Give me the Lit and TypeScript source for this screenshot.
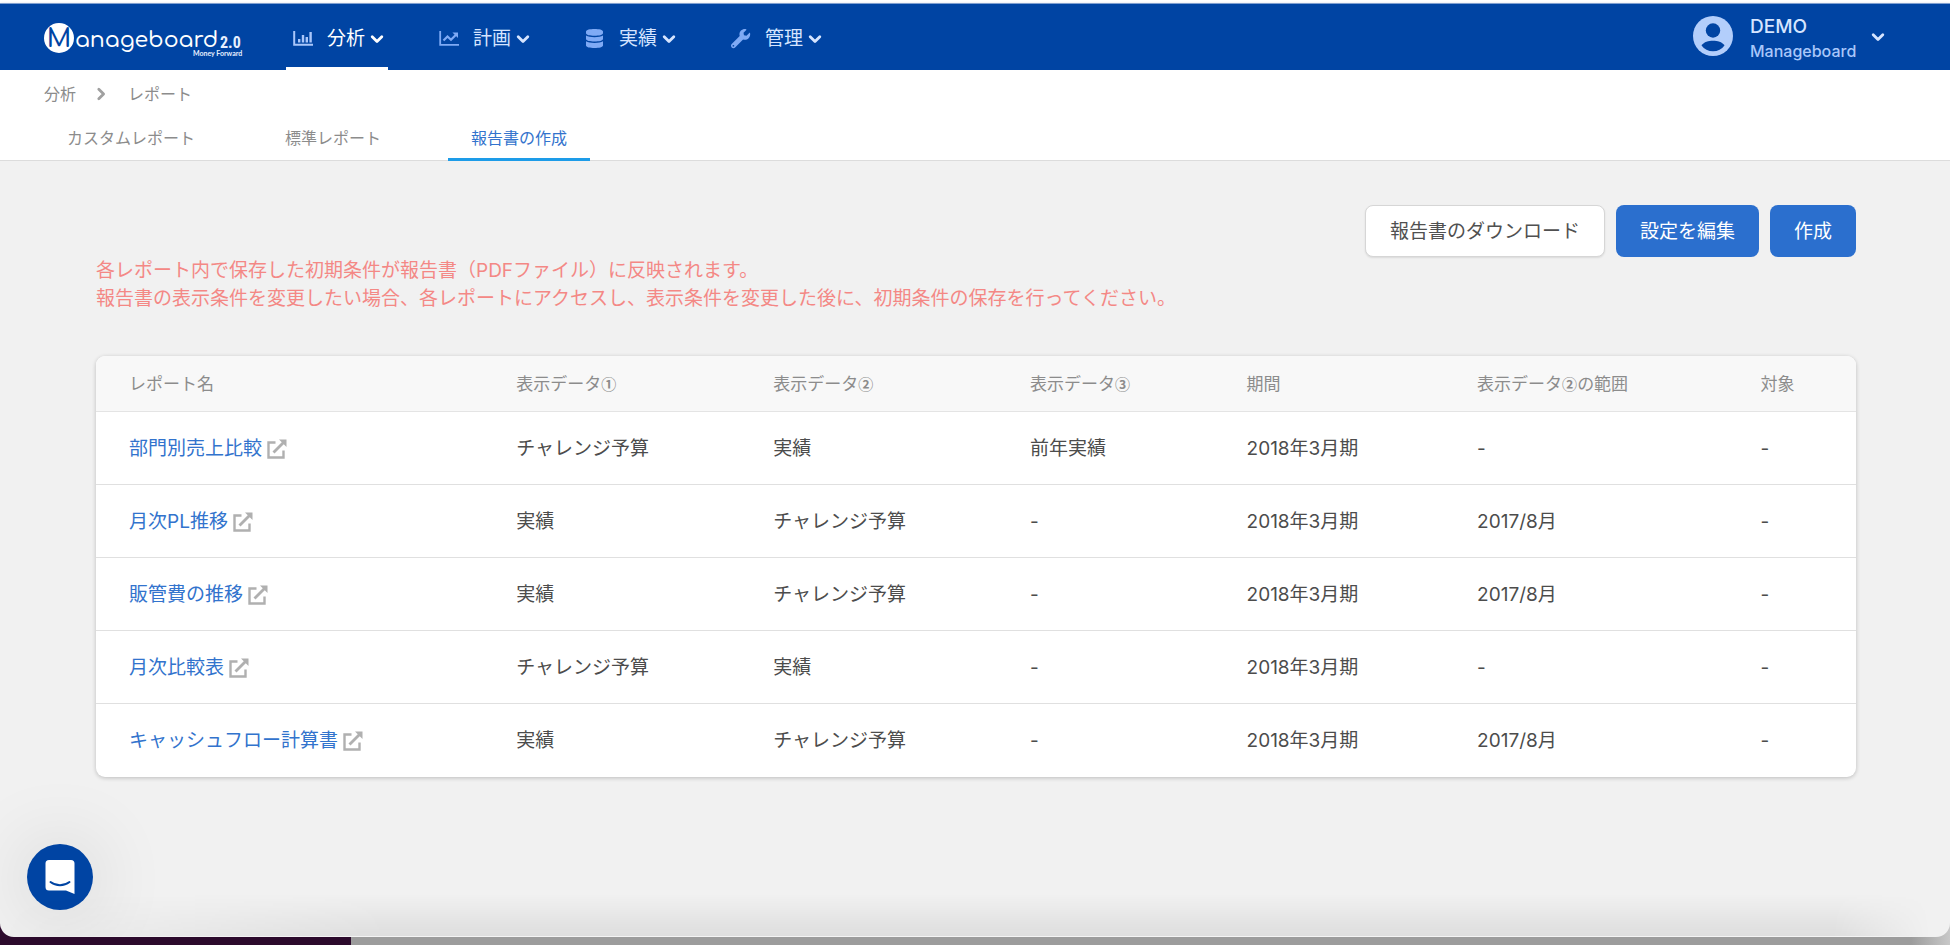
import { LitElement, html, css, svg } from "lit";
import { customElement, property } from "lit/decorators.js";
import { classMap } from "lit/directives/class-map.js";

interface NavItem {
  label: string;
  icon: string;
  active?: boolean;
}

interface Report {
  name: string;
  data1: string;
  data2: string;
  data3: string;
  period: string;
  range: string;
  target: string;
}

const NAV: NavItem[] = [
  { label: "分析", icon: "bars", active: true },
  { label: "計画", icon: "trend" },
  { label: "実績", icon: "database" },
  { label: "管理", icon: "wrench" },
];

const TABS = ["カスタムレポート", "標準レポート", "報告書の作成"];
const ACTIVE_TAB = 2;

const COLUMNS = [
  { text: "レポート名" },
  { text: "表示データ", mark: "①" },
  { text: "表示データ", mark: "②" },
  { text: "表示データ", mark: "③" },
  { text: "期間" },
  { text: "表示データ", mark: "②", rest: "の範囲" },
  { text: "対象" },
];

const REPORTS: Report[] = [
  { name: "部門別売上比較", data1: "チャレンジ予算", data2: "実績", data3: "前年実績", period: "2018年3月期", range: "-", target: "-" },
  { name: "月次PL推移", data1: "実績", data2: "チャレンジ予算", data3: "-", period: "2018年3月期", range: "2017/8月", target: "-" },
  { name: "販管費の推移", data1: "実績", data2: "チャレンジ予算", data3: "-", period: "2018年3月期", range: "2017/8月", target: "-" },
  { name: "月次比較表", data1: "チャレンジ予算", data2: "実績", data3: "-", period: "2018年3月期", range: "-", target: "-" },
  { name: "キャッシュフロー計算書", data1: "実績", data2: "チャレンジ予算", data3: "-", period: "2018年3月期", range: "2017/8月", target: "-" },
];

const ICONS: Record<string, unknown> = {
  bars: svg`<path d="M1.2 2v13.8H20" fill="none" stroke="currentColor" stroke-width="2"/>
    <path d="M5 10h2.4v3.4H5zM8.8 6h2.4v7.4H8.8zM12.6 8H15v5.4h-2.4zM16.4 3h2.4v10.4h-2.4z" fill="currentColor"/>`,
  trend: svg`<path d="M1.2 2v13.8H20" fill="none" stroke="currentColor" stroke-width="1.8"/>
    <path d="M4.5 11.5 8.500 7.500 12 10.800 17 5.800" fill="none" stroke="currentColor" stroke-width="2.2"/>
    <path d="M13.4 3.5H19v5.600z" fill="currentColor"/>`,
  database: svg`<path d="M1 2.5C1 .8 5 0 9.500 0S18 .8 18 2.500v1.700C18 5.900 14 6.700 9.500 6.700S1 5.900 1 4.200z
    M1 6.500c1.800 1.200 5 1.700 8.500 1.700s6.700-.5 8.500-1.700v3.400c0 1.700-4 2.500-8.500 2.500S1 11.600 1 9.900z
    M1 12.200c1.800 1.200 5 1.700 8.500 1.700s6.700-.5 8.500-1.700v4.300c0 1.700-4 2.500-8.500 2.500S1 18.200 1 16.500z" fill="currentColor"/>`,
  wrench: svg`<path transform="scale(.0375)" d="M507.700 109.100c-2.200-9-13.500-12.100-20.100-5.500l-74.400 74.400-67.900-11.300L334 98.900l74.400-74.400c6.600-6.600 3.400-17.900-5.700-20.200-47.400-11.700-99.600.9-136.600 37.900-39.600 39.600-50.500 97.100-34.100 147.200L18.700 402.800c-25 25-25 65.500 0 90.500s65.500 25 90.500 0l213.200-213.200c50.100 16.700 107.500 5.700 147.400-34.200 37.100-37.100 49.700-89.300 37.900-136.800zM64 472c-13.200 0-24-10.800-24-24 0-13.300 10.700-24 24-24s24 10.700 24 24c0 13.200-10.700 24-24 24z" fill="currentColor"/>`,
};

@customElement("nav-icon")
class NavIcon extends LitElement {
  static styles = css`
    :host { display: block; }
    .glyph { display: block; width: 20px; height: 20px; overflow: visible; }
  `;
  @property() name = "bars";
  render() {
    return html`<svg class="glyph" viewBox="0 0 20 20" aria-hidden="true">${ICONS[this.name]}</svg>`;
  }
}

@customElement("chevron-icon")
class ChevronIcon extends LitElement {
  static styles = css`
    :host { display: block; }
    .glyph { display: block; width: 14px; height: 14px; }
    .right { transform: rotate(-90deg); }
  `;
  @property() direction = "down";
  render() {
    return html`<svg class=${classMap({ glyph: true, right: this.direction === "right" })} viewBox="0 0 14 14" aria-hidden="true">
      <path d="M2.2 4.8 7 9.6l4.8-4.8" fill="none" stroke="currentColor" stroke-width="2.8" stroke-linecap="round" stroke-linejoin="round"/>
    </svg>`;
  }
}

@customElement("app-header")
class AppHeader extends LitElement {
  static styles = css`
    :host { display: block; }
    .bar {
      display: flex;
      align-items: stretch;
      box-sizing: border-box;
      height: 67px;
      padding: 0 65px 0 44px;
      background: #0044a3;
      border-top: 1px solid #7f9fd0;
      color: #d6e5ff;
      box-shadow: 0 1px 3px rgba(0, 40, 120, 0.25);
    }
    .brand { display: flex; align-items: center; margin-right: 42px; }
    .logo { display: block; width: 200px; height: 48px; }
    .logo-name { font: 500 22px "Comfortaa", "Quicksand", "Lato", sans-serif; fill: #fff; }
    .logo-m { font: 600 25px "Comfortaa", "Quicksand", "Lato", sans-serif; fill: #0044a3; }
    .logo-version { font: 700 16px "Roboto Condensed", "Roboto", sans-serif; fill: #e6efff; }
    .logo-owner { font: 700 7px "Lato", sans-serif; fill: #e6efff; }
    .nav { display: flex; gap: 44px; }
    .item {
      display: flex;
      align-items: center;
      box-sizing: border-box;
      width: 102px;
      padding: 6px 0 0 7px;
      color: inherit;
      font: 400 19px/24px Inter, "Noto Sans CJK JP", sans-serif;
      white-space: nowrap;
      text-decoration: none;
      border-bottom: 3px solid transparent;
    }
    .item.active { color: #fff; border-bottom-color: #fff; }
    .item-icon { color: #7faaf5; margin-right: 14px; }
    .active .item-icon { color: #a9c6fa; }
    .item-arrow { margin-left: 5px; }
    .user {
      display: flex;
      align-items: center;
      margin-left: auto;
      padding: 0;
      border: 0;
      background: none;
      color: #d6e5ff;
      text-align: left;
      font: 500 19px/24px Inter, "Noto Sans CJK JP", sans-serif;
    }
    .avatar { display: block; width: 40px; height: 40px; margin: 0 17px 2px 0; }
    .names { display: flex; flex-direction: column; min-width: 110px; padding-top: 3px; }
    .org { font-size: 16px; color: #a9c7fa; }
    .user-arrow { margin-left: 11px; }
  `;
  render() {
    return html`<header class="bar">
      <a class="brand" href="#" aria-label="Manageboard 2.0">
        <svg class="logo" viewBox="0 0 200 48">
          <circle cx="15" cy="25" r="15" fill="#fff"/>
          <text class="logo-m" x="15" y="34" text-anchor="middle">M</text>
          <text class="logo-name" x="31" y="34">anageboard</text>
          <text class="logo-version" x="176" y="35">2.0</text>
          <text class="logo-owner" x="149" y="43">Money Forward</text>
        </svg>
      </a>
      <nav class="nav">
        ${NAV.map(
          (n) => html`<a href="#" class=${classMap({ item: true, active: !!n.active })}>
            <nav-icon class="item-icon" name=${n.icon}></nav-icon>
            <span>${n.label}</span>
            <chevron-icon class="item-arrow"></chevron-icon>
          </a>`
        )}
      </nav>
      <button class="user" type="button">
        <svg class="avatar" viewBox="0 0 40 40" aria-hidden="true">
          <circle cx="20" cy="20" r="20" fill="#b3cefb"/>
          <circle cx="20" cy="14.5" r="7.2" fill="#0044a3"/>
          <path d="M8.5 29.5C11 25.800 15.500 24.800 20 24.800s9 1 11.500 4.700C28.800 33.200 24.800 35.300 20 35.300S11.200 33.200 8.500 29.500z" fill="#0044a3"/>
        </svg>
        <span class="names"><span>DEMO</span><span class="org">Manageboard</span></span>
        <chevron-icon class="user-arrow"></chevron-icon>
      </button>
    </header>`;
  }
}

@customElement("page-tabs")
class PageTabs extends LitElement {
  static styles = css`
    :host { display: block; }
    .panel {
      background: #fff;
      padding: 12px 44px 0;
      border-bottom: 1px solid #dcdcdc;
      font: 400 16px/24px Inter, "Noto Sans CJK JP", sans-serif;
      color: #8c8c8c;
    }
    .crumbs { display: flex; align-items: center; }
    .crumb { color: inherit; text-decoration: none; }
    .sep { margin: 0 20px 0 18px; color: #a0a0a0; }
    .tabs { display: flex; gap: 44px; margin: 20px 0 -1px; }
    .tab {
      padding: 0 23px 8px;
      border-bottom: 3px solid transparent;
      color: inherit;
      text-decoration: none;
    }
    .tab.active { color: #3273cd; border-bottom-color: #1d9ce8; }
  `;
  render() {
    return html`<div class="panel">
      <nav class="crumbs" aria-label="breadcrumb">
        <a class="crumb" href="#">分析</a>
        <chevron-icon class="sep" direction="right"></chevron-icon>
        <a class="crumb" href="#">レポート</a>
      </nav>
      <nav class="tabs">
        ${TABS.map((t, i) => html`<a href="#" class=${classMap({ tab: true, active: i === ACTIVE_TAB })}>${t}</a>`)}
      </nav>
    </div>`;
  }
}

@customElement("report-table")
class ReportTable extends LitElement {
  static styles = css`
    :host { display: block; }
    .card {
      border-radius: 9px;
      overflow: hidden;
      background: #fff;
      box-shadow: 0 1px 4px rgba(0, 0, 0, 0.22);
    }
    .table {
      width: 100%;
      border-collapse: separate;
      border-spacing: 0;
      table-layout: fixed;
      font: 400 19px/28px Inter, "Noto Sans CJK JP", sans-serif;
      color: #4c4c4c;
    }
    .c0 { width: 22%; }
    .c1, .c2 { width: 14.6%; }
    .c3 { width: 12.3%; }
    .c4 { width: 13.1%; }
    .c5 { width: 16.1%; }
    .head, .cell { box-sizing: border-box; padding: 1px 0 0 33px; text-align: left; white-space: nowrap; }
    .head {
      height: 56px;
      background: #f8f8f8;
      border-bottom: 1px solid #e4e4e4;
      font-size: 17px;
      font-weight: 400;
      color: #8c8c8c;
    }
    .mark { font-family: "Noto Sans CJK JP", sans-serif; font-size: 15px; font-weight: 700; }
    .cell { height: 73px; border-bottom: 1px solid #e0e0e0; }
    .row:last-child .cell { border-bottom: 0; }
    .link { display: inline-flex; align-items: center; gap: 5px; color: #3273cd; text-decoration: none; }
    .open { display: block; width: 20px; height: 20px; color: #b0b0b0; }
  `;
  render() {
    return html`<div class="card">
      <table class="table">
        <thead>
          <tr>${COLUMNS.map(
            (c, i) => html`<th scope="col" class="head c${i}">${c.text}${c.mark ? html`<span class="mark">${c.mark}</span>` : ""}${c.rest ?? ""}</th>`
          )}</tr>
        </thead>
        <tbody>
          ${REPORTS.map(
            (r) => html`<tr class="row">
              <td class="cell">
                <a class="link" href="#">${r.name}
                  <svg class="open" viewBox="0 0 20 20" aria-hidden="true">
                    <path d="M8.5 3.5H1.500v15h15V11.500" fill="none" stroke="currentColor" stroke-width="2.4"/>
                    <path d="M6.5 13.5 17 3" fill="none" stroke="currentColor" stroke-width="2.8"/>
                    <path d="M12 .5h7.500V8z" fill="currentColor"/>
                  </svg>
                </a>
              </td>
              <td class="cell">${r.data1}</td>
              <td class="cell">${r.data2}</td>
              <td class="cell">${r.data3}</td>
              <td class="cell">${r.period}</td>
              <td class="cell">${r.range}</td>
              <td class="cell">${r.target}</td>
            </tr>`
          )}
        </tbody>
      </table>
    </div>`;
  }
}

@customElement("app-root")
class AppRoot extends LitElement {
  static styles = css`
    :host {
      display: flex;
      flex-direction: column;
      box-sizing: border-box;
      min-height: 100vh;
      padding-bottom: 8px;
      background: linear-gradient(90deg, #2c0a2c 0 18%, #9c9c9c 18% 98%, #c8c8c8 100%);
    }
    .window {
      position: relative;
      flex: 1;
      display: flex;
      flex-direction: column;
      padding-top: 3px;
      border-radius: 0 0 14px 14px;
      overflow: hidden;
      background: linear-gradient(#fff 0 3px, #f1f1f1 3px);
    }
    .window::after {
      content: "";
      position: absolute;
      inset: auto 0 0;
      height: 42px;
      pointer-events: none;
      background: linear-gradient(transparent, rgba(0, 0, 0, 0.08));
      mask-image: linear-gradient(90deg, transparent, #000 20%, #000 94%, transparent 99%);
      border-bottom: 1px solid #f4f4f4;
    }
    .main { padding: 44px 94px 160px 96px; }
    .actions { display: flex; justify-content: flex-end; gap: 11px; }
    .btn {
      height: 52px;
      padding: 1px 24px 0;
      border: 0;
      border-radius: 8px;
      background: #2b6fce;
      color: #fff;
      font: 400 19px/28px Inter, "Noto Sans CJK JP", sans-serif;
    }
    .btn.plain {
      border: 1px solid #d6d6d6;
      background: #fff;
      color: #505050;
      box-shadow: 0 1px 2px rgba(0, 0, 0, 0.1);
    }
    .notice {
      margin: 0 0 43px;
      color: #f48885;
      font: 400 19px/28px Inter, "Noto Sans CJK JP", sans-serif;
    }
    .chat {
      position: absolute;
      left: 27px;
      bottom: 27px;
      display: grid;
      place-items: center;
      width: 66px;
      height: 66px;
      padding: 0;
      border: 0;
      border-radius: 50%;
      background: #0044a3;
      box-shadow: 0 2px 80px rgba(0, 0, 0, 0.16);
    }
    .chat-icon { display: block; width: 30px; height: 34px; }
  `;
  render() {
    return html`<div class="window">
      <app-header></app-header>
      <page-tabs></page-tabs>
      <main class="main">
        <div class="actions">
          <button class="btn plain" type="button">報告書のダウンロード</button>
          <button class="btn" type="button">設定を編集</button>
          <button class="btn" type="button">作成</button>
        </div>
        <p class="notice">
          各レポート内で保存した初期条件が報告書（PDFファイル）に反映されます。<br />
          報告書の表示条件を変更したい場合、各レポートにアクセスし、表示条件を変更した後に、初期条件の保存を行ってください。
        </p>
        <report-table></report-table>
      </main>
      <button class="chat" type="button" aria-label="チャット">
        <svg class="chat-icon" viewBox="0 0 30 34" aria-hidden="true">
          <path d="M4 0h22a3.5 3.5 0 0 1 3.500 3.500V34l-8.500-3.500H4A3.500 3.500 0 0 1 .5 27V3.500A3.500 3.500 0 0 1 4 0z" fill="#fff"/>
          <path d="M5.5 22c5.500 4.200 13.500 4.200 19 0" fill="none" stroke="#0044a3" stroke-width="2" stroke-linecap="round"/>
        </svg>
      </button>
    </div>`;
  }
}
